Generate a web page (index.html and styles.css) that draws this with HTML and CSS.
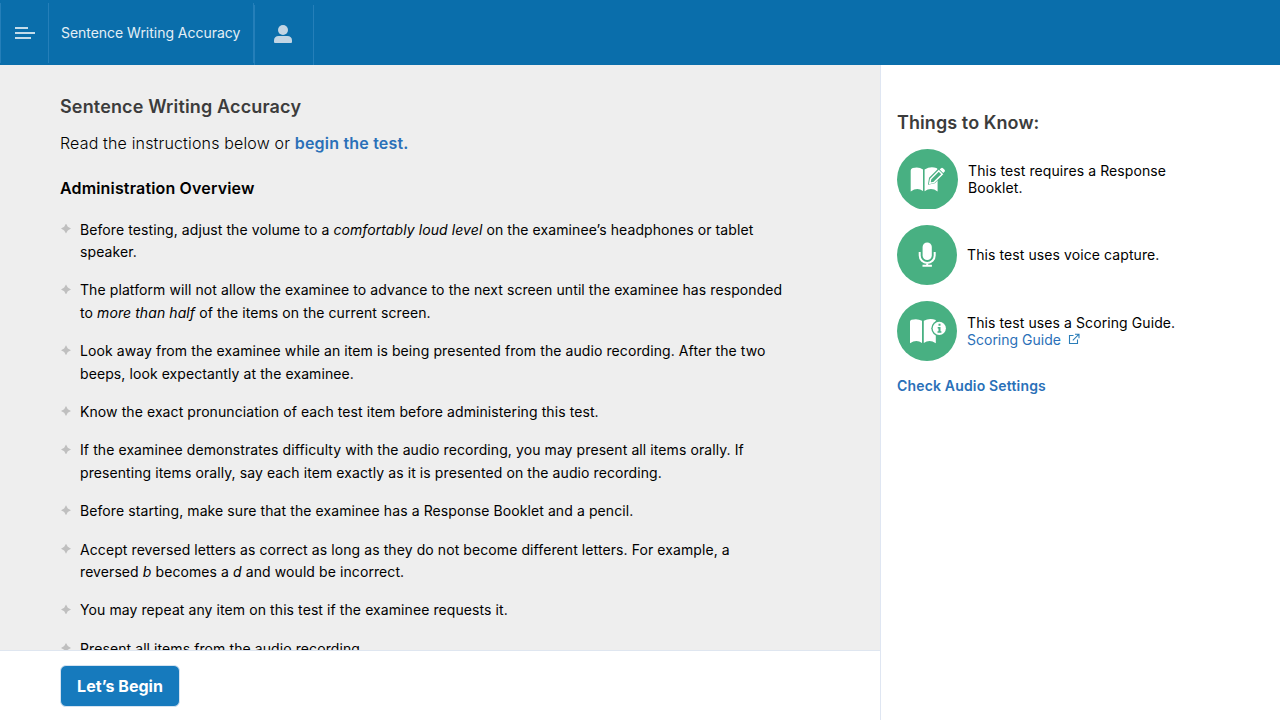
FILE: index.html
```html
<!DOCTYPE html>
<html lang="en">
<head>
<meta charset="utf-8">
<title>Sentence Writing Accuracy</title>
<link rel="stylesheet" href="styles.css">
</head>
<body>
<div class="app">
  <header class="topbar">
    <button class="menu" aria-label="Menu"><svg width="20" height="12" viewBox="0 0 20 12"><path d="M0 0h13v2H0zM0 5h20v2H0zM0 10h16v2H0z"/></svg></button>
    <div class="crumb">Sentence Writing Accuracy</div>
    <div class="examinee"><svg width="18" height="18" viewBox="0 0 18 18"><circle cx="9" cy="5" r="5"/><path d="M4.500 11h9c2.700 0 4.500 1.900 4.500 4.300V17q0 1-1 1H1q-1 0-1-1v-1.700C0 12.900 1.800 11 4.500 11z"/></svg></div>
  </header>
  <div class="body">
    <main class="main">
      <section class="content">
        <h1 class="title">Sentence Writing Accuracy</h1>
        <p class="intro">Read the instructions below or <a class="begin-link">begin the test.</a></p>
        <h2 class="subtitle">Administration Overview</h2>
        <ul class="list">
          <li>Before testing, adjust the volume to a <em>comfortably loud level</em> on the examinee’s headphones or tablet<br>speaker.</li>
          <li>The platform will not allow the examinee to advance to the next screen until the examinee has responded<br>to <em>more than half</em> of the items on the current screen.</li>
          <li>Look away from the examinee while an item is being presented from the audio recording. After the two<br>beeps, look expectantly at the examinee.</li>
          <li>Know the exact pronunciation of each test item before administering this test.</li>
          <li>If the examinee demonstrates difficulty with the audio recording, you may present all items orally. If<br>presenting items orally, say each item exactly as it is presented on the audio recording.</li>
          <li>Before starting, make sure that the examinee has a Response Booklet and a pencil.</li>
          <li>Accept reversed letters as correct as long as they do not become different letters. For example, a<br>reversed <em>b</em> becomes a <em>d</em> and would be incorrect.</li>
          <li>You may repeat any item on this test if the examinee requests it.</li>
          <li>Present all items from the audio recording.</li>
        </ul>
      </section>
      <footer class="footer"><button class="start">Let’s Begin</button></footer>
    </main>
    <aside class="side">
      <h2 class="side-title">Things to Know:</h2>
      <div class="fact">
        <svg class="badge" width="61" height="60" viewBox="0 0 61 60">
          <circle class="disc" cx="30.500" cy="30.500" r="30.500"/>
          <path class="ink" d="M13.700 21.500q0-2 2-2.500 6-1.700 10.300 1.400v21.600q-5.800-4.200-12.300.5z"/>
          <path class="ink" d="M27.600 20.400q6-3.500 11.800-1.300l1.200 1v22.400q-6.500-4.700-13-.3z"/>
          <path class="pencil" d="M32.200 34.500l.8-5.200 9.700-9.700 3.900-2 2.200 2.200-2 3.900-9.400 9.700z"/>
          <path class="pencil-line" d="M32.800 34.200l.8-4.200 8.200-8.200 3.400 3.400-8.200 8.200z"/>
          <path class="ink" d="M42.700 20.600l1.300-1.300q1-1 2 0l1.500 1.500q1 1 0 2l-1.300 1.300z"/>
        </svg>
        <p>This test requires a Response<br>Booklet.</p>
      </div>
      <div class="fact">
        <svg class="badge" width="60" height="60" viewBox="0 0 60 60">
          <circle class="disc" cx="30" cy="30" r="30"/>
          <rect class="ink" x="25.600" y="17.500" width="9.200" height="17.500" rx="4.600"/>
          <path class="stroke" d="M22.700 27v3.500a7.500 7.500 0 0 0 15 0V27M30.200 38v3M25.500 40.800h9.400"/>
        </svg>
        <p class="single">This test uses voice capture.</p>
      </div>
      <div class="fact">
        <svg class="badge" width="60" height="60" viewBox="0 0 60 60">
          <circle class="disc" cx="30" cy="30" r="30"/>
          <path class="ink" d="M13 20.500q0-1.300 1.500-1.700 5.700-1.700 10.500.9v22.400q-5.500-4.200-12 .2z"/>
          <path class="ink" d="M26.800 19.700q5.700-3 12-.7v23.200q-6.500-4.200-12-.1z"/>
          <circle class="disc" cx="42.300" cy="27.300" r="8"/>
          <circle class="ink" cx="42.300" cy="27.300" r="6.600"/>
          <path class="disc" d="M41.500 22.800h2v2h-2zM40.700 26h2.800v4.200h.9v1.500h-3.900v-1.500h1v-2.700h-.8z"/>
        </svg>
        <p>This test uses a Scoring Guide.<br><a class="guide">Scoring Guide<svg class="external" width="12" height="12" viewBox="0 0 12 12"><path d="M5.500 2.500h-4v8h8v-4M7 1.200h4v4M10.800 1.400L4.800 7.300"/></svg></a></p>
      </div>
      <a class="audio-link">Check Audio Settings</a>
    </aside>
  </div>
</div>
</body>
</html>
```
FILE: styles.css
```css
* { box-sizing: border-box; }
body { margin: 0; font-family: Inter, "Liberation Sans", sans-serif; font-size: 14px; color: #000; }
h1, h2, p, ul { margin: 0; padding: 0; font-weight: 400; }
button { font: inherit; border: 0; padding: 0; background: none; }
.app { display: flex; flex-direction: column; width: 1280px; height: 720px; overflow: hidden; }
.topbar { display: flex; height: 65px; flex: none; align-items: flex-start; background: #0a6eab; }
.menu { width: 49px; height: 60px; margin-top: 3px; display: flex; align-items: center; justify-content: center; border-left: 1px solid #257fb9; border-right: 1px solid #257fb9; }
.menu svg { fill: #c4dcea; }
.crumb { width: 205px; height: 60px; margin-top: 3px; padding-left: 12px; line-height: 60px; letter-spacing: -0.03px; color: #e3eff6; border-right: 1px solid #257fb9; white-space: nowrap; }
.examinee { width: 60px; height: 60px; margin-top: 5px; padding: 20px 0 0 19px; border-left: 1px solid #257fb9; border-right: 1px solid #257fb9; }
.examinee svg { display: block; fill: #c2d5e4; }
.body { display: flex; flex: 1; min-height: 0; }
.main { display: flex; flex-direction: column; width: 880px; }
.content { flex: 1; min-height: 0; overflow: hidden; padding: 30px 60px 0; background: #eee; }
.title { font-size: 18px; line-height: 24px; font-weight: 600; letter-spacing: 0.15px; color: #3c3c3c; }
.intro { margin-top: 12px; font-size: 16px; line-height: 24px; font-weight: 300; letter-spacing: 0.16px; }
.begin-link { font-weight: 600; letter-spacing: 0.19px; color: #2a70b8; }
.subtitle { margin-top: 21px; font-size: 16px; line-height: 24px; font-weight: 600; letter-spacing: 0.16px; }
.list { margin-top: 18.6px; list-style: none; letter-spacing: 0.087px; }
.list li { padding-left: 20px; margin-bottom: 16px; line-height: 22.4px; white-space: nowrap; position: relative; }
.list li::before { content: ""; position: absolute; left: 1px; top: 5px; width: 10px; height: 10px; background: #bfbfbf; clip-path: polygon(50% 0, 68% 32%, 100% 50%, 68% 68%, 50% 100%, 32% 68%, 0 50%, 32% 32%); }
.footer { flex: none; height: 70px; padding: 14px 60px; border-top: 1px solid #dfe6f0; background: #fff; }
.start { display: block; width: 120px; height: 42px; border: 1px solid #d5e3f1; border-radius: 6px; background: #167abd; color: #fff; font-size: 16px; font-weight: 700; }
.side { flex: 1; padding: 46px 16px 0; border-left: 1px solid #dfe6f2; background: #fff; }
.side-title { font-size: 18px; line-height: 24px; font-weight: 600; letter-spacing: 0.08px; color: #3c3c3c; margin-bottom: 14px; }
.fact { display: flex; align-items: center; gap: 10px; height: 60px; margin-bottom: 16px; line-height: 17px; letter-spacing: 0.09px; white-space: nowrap; }
.single { padding-bottom: 1px; }
.badge { flex: none; }
.disc { fill: #48b082; }
.ink { fill: #fff; }
.pencil { fill: #48b082; stroke: #48b082; stroke-width: 2; }
.pencil-line { fill: none; stroke: #fff; stroke-width: 1.5; }
.stroke { fill: none; stroke: #fff; stroke-width: 2; }
.guide { letter-spacing: 0; color: #2a70b8; }
.external { margin-left: 7px; vertical-align: 0; fill: none; stroke: #2a7db8; stroke-width: 1.100; }
.audio-link { display: block; margin-top: 16px; line-height: 17px; font-weight: 600; letter-spacing: 0.17px; color: #2a70b8; }
```
